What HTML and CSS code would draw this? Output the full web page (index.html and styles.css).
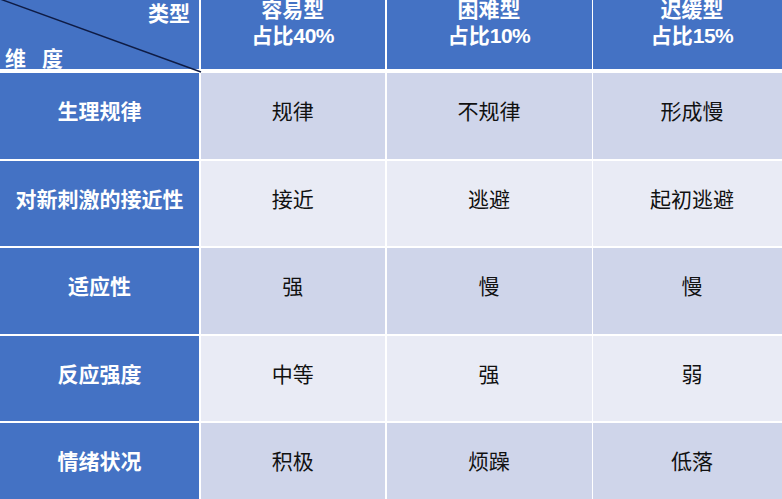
FILE: index.html
```html
<!DOCTYPE html>
<html lang="zh">
<head>
<meta charset="utf-8">
<title>气质类型</title>
<link rel="stylesheet" href="styles.css">
</head>
<body>
<div class="table">
  <div class="cell corner">
    <svg class="diag" width="201" height="73" viewBox="0 0 201 73"><line x1="0" y1="-1" x2="201" y2="72" stroke="#0f1c45" stroke-width="1.4"/></svg>
    <span class="corner-type">类型</span>
    <span class="corner-dim"><span>维</span><span>度</span></span>
  </div>
  <div class="cell head"><span>容易型</span><span>占比<span class="num">40%</span></span></div>
  <div class="cell head"><span>困难型</span><span>占比<span class="num">10%</span></span></div>
  <div class="cell head"><span>迟缓型</span><span>占比<span class="num">15%</span></span></div>

  <div class="cell label">生理规律</div>
  <div class="cell odd">规律</div>
  <div class="cell odd">不规律</div>
  <div class="cell odd">形成慢</div>

  <div class="cell label">对新刺激的接近性</div>
  <div class="cell even">接近</div>
  <div class="cell even">逃避</div>
  <div class="cell even">起初逃避</div>

  <div class="cell label">适应性</div>
  <div class="cell odd">强</div>
  <div class="cell odd">慢</div>
  <div class="cell odd">慢</div>

  <div class="cell label">反应强度</div>
  <div class="cell even">中等</div>
  <div class="cell even">强</div>
  <div class="cell even">弱</div>

  <div class="cell label">情绪状况</div>
  <div class="cell odd">积极</div>
  <div class="cell odd">烦躁</div>
  <div class="cell odd">低落</div>
</div>
</body>
</html>
```
FILE: styles.css
```css
html, body {
  margin: 0;
  padding: 0;
  background: #ffffff;
  overflow: hidden;
}
body {
  width: 782px;
  height: 499px;
  font-family: "Noto Sans CJK SC", "Liberation Sans", sans-serif;
}
.table {
  display: grid;
  width: 791px;
  grid-template-columns: 199px 184.5px 205px 198px;
  grid-template-rows: 71px repeat(5, 85.5px);
  column-gap: 1.5px;
  row-gap: 2px;
  background: #ffffff;
}
.cell {
  display: flex;
  align-items: center;
  justify-content: center;
  font-size: 21px;
  line-height: 26px;
  padding-bottom: 11px;
  box-sizing: border-box;
}
.corner, .head {
  background: #4472c4;
  color: #ffffff;
  font-weight: bold;
  margin-bottom: 2px;
}
.corner {
  position: relative;
  display: block;
  padding: 0;
}
.diag {
  position: absolute;
  left: 0;
  top: 0;
  overflow: visible;
}
.corner-type {
  position: absolute;
  right: 9px;
  top: -1px;
}
.corner-dim {
  position: absolute;
  left: 5px;
  top: 44px;
  display: flex;
  gap: 16px;
}
.head {
  flex-direction: column;
  justify-content: flex-start;
  padding: 0;
  overflow: hidden;
}
.head > span:first-child {
  margin-top: -5px;
}
.num {
  font-family: "Liberation Sans", sans-serif;
  font-weight: bold;
  letter-spacing: -0.5px;
}
.label {
  background: #4472c4;
  color: #ffffff;
  font-weight: bold;
}
.odd {
  background: #cfd5ea;
  color: #111111;
}
.even {
  background: #e9ebf5;
  color: #111111;
}
```
